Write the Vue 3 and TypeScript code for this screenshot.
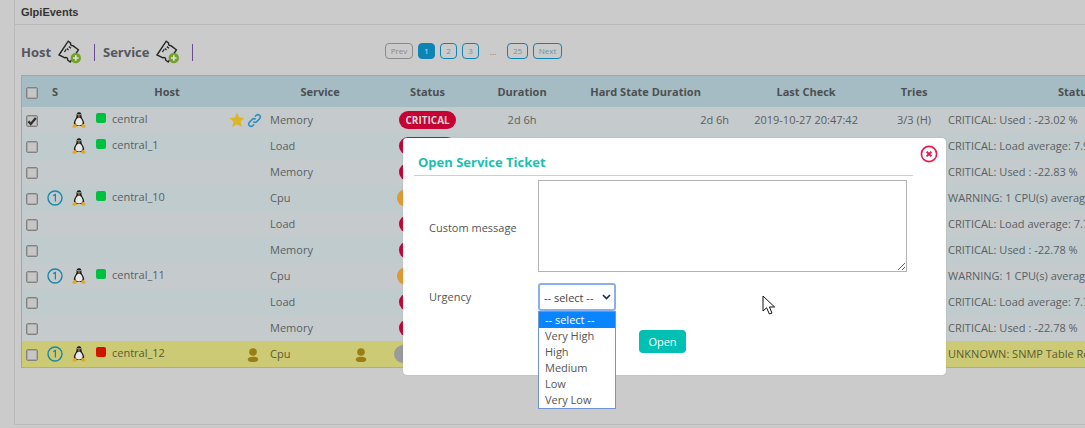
<script setup lang="ts">
interface Row {
  check?: boolean
  ack?: boolean
  os?: boolean
  state?: 'up' | 'down'
  host?: string
  hostIcons?: 'fav' | 'user'
  service: string
  svcUser?: boolean
  status: 'critical' | 'warning' | 'unknown'
  statusLabel?: string
  duration?: string
  hard?: string
  last?: string
  tries?: string
  output: string
}
const rows: Row[] = [
  { check: true, os: true, state: 'up', host: 'central', hostIcons: 'fav', service: 'Memory', status: 'critical', statusLabel: 'CRITICAL', duration: '2d 6h', hard: '2d 6h', last: '2019-10-27 20:47:42', tries: '3/3 (H)', output: 'CRITICAL: Used : -23.02 %' },
  { os: true, state: 'up', host: 'central_1', service: 'Load', status: 'critical', output: 'CRITICAL: Load average: 7.91, 7.64, 7.20' },
  { service: 'Memory', status: 'critical', output: 'CRITICAL: Used : -22.83 %' },
  { ack: true, os: true, state: 'up', host: 'central_10', service: 'Cpu', status: 'warning', output: 'WARNING: 1 CPU(s) average usage' },
  { service: 'Load', status: 'critical', output: 'CRITICAL: Load average: 7.71, 7.60, 7.20' },
  { service: 'Memory', status: 'critical', output: 'CRITICAL: Used : -22.78 %' },
  { ack: true, os: true, state: 'up', host: 'central_11', service: 'Cpu', status: 'warning', output: 'WARNING: 1 CPU(s) average usage' },
  { service: 'Load', status: 'critical', output: 'CRITICAL: Load average: 7.71, 7.60, 7.20' },
  { service: 'Memory', status: 'critical', output: 'CRITICAL: Used : -22.78 %' },
  { ack: true, os: true, state: 'down', host: 'central_12', hostIcons: 'user', service: 'Cpu', svcUser: true, status: 'unknown', output: 'UNKNOWN: SNMP Table Request failed' }
]
const urgencies: string[] = ['-- select --', 'Very High', 'High', 'Medium', 'Low', 'Very Low']
const colWidths: number[] = [22, 22, 26, 18, 118, 40, 82, 22, 111, 78, 169, 152, 64, 328]
const ticketTitles: { label: string; width: number }[] = [
  { label: 'Host', width: 30 },
  { label: 'Service', width: 46 }
]
</script>

<template>
  <div class="page">
    <main class="panel">
      <header class="panel-head">GlpiEvents</header>

      <div class="toolbar">
        <template v-for="t in ticketTitles" :key="t.label">
          <span class="tool-label" :style="{ width: t.width + 'px' }">{{ t.label }}</span>
          <svg class="ticket" width="24" height="24" viewBox="0 0 24 24" fill="none">
            <path d="M1 15 L10.2 1.2 L12.6 3 C12.2 4.6 13.2 5.8 14.8 5.6 L20.4 9.8 L12.2 22 L9.6 20 C10 18.4 8.8 17.2 7.2 17.6 L7 17.8 Z" stroke="#262626" stroke-width="1.4" stroke-linejoin="miter" />
            <path d="M6.4 12 L8.2 9.4 M8.8 8.6 L10.6 10 M10.8 6.6 L13 8.2" stroke="#262626" stroke-width="1.3" />
            <circle cx="17.8" cy="18" r="5.2" fill="#74a12e" />
            <path d="M17.8 15.2 V20.8 M15 18 H20.6" stroke="#dce6c8" stroke-width="1.7" />
          </svg>
          <span class="tool-sep"></span>
        </template>
        <nav class="pager">
          <span class="pg pg-off pg-prev">Prev</span>
          <span class="pg pg-on">1</span>
          <span class="pg">2</span>
          <span class="pg">3</span>
          <span class="pg-dots">...</span>
          <span class="pg pg-wide">25</span>
          <span class="pg pg-next">Next</span>
        </nav>
      </div>

      <table class="grid">
        <colgroup>
          <col v-for="(w, i) in colWidths" :key="i" :style="{ width: w + 'px' }" />
        </colgroup>
        <thead>
          <tr>
            <th class="c-check"><span class="cb"></span></th>
            <th>S</th>
            <th colspan="4">Host</th>
            <th colspan="2">Service</th>
            <th>Status</th>
            <th>Duration</th>
            <th>Hard State Duration</th>
            <th>Last Check</th>
            <th>Tries</th>
            <th>Status information</th>
          </tr>
        </thead>
        <tbody>
          <tr v-for="(r, i) in rows" :key="i" :class="{ odd: i % 2 === 1, alert: r.status === 'unknown' }">
            <td class="c-check">
              <span class="cb">
                <svg v-if="r.check" width="10" height="10" viewBox="0 0 10 10"><path d="M1.4 5.2 L3.8 8 L8.8 2" fill="none" stroke="#333" stroke-width="2.4" /></svg>
              </span>
            </td>
            <td class="c-center">
              <svg v-if="r.ack" class="ack" width="16" height="16" viewBox="0 0 16 16">
                <circle cx="8" cy="8" r="7" fill="none" stroke="#1c86a6" stroke-width="1.4" />
                <path d="M6.2 5.6 L8.4 4.4 V11.6" fill="none" stroke="#1c86a6" stroke-width="1.2" />
              </svg>
            </td>
            <td class="c-center">
              <svg v-if="r.os" class="tux" width="14" height="16" viewBox="0 0 14 16">
                <path d="M7 0.3 C4.7 0.3 4.5 2.4 4.5 4.2 C4.5 6 2 8 1.8 11 C1.7 12.8 3 14 4 14 H10 C11 14 12.3 12.8 12.2 11 C12 8 9.5 6 9.5 4.2 C9.5 2.4 9.3 0.3 7 0.3 Z" fill="#1e1e1e" />
                <path d="M7 5.4 C5.2 5.6 3.4 8.4 3.4 10.6 C3.4 12.6 5 13.6 7 13.6 C9 13.6 10.6 12.6 10.6 10.6 C10.6 8.4 8.8 5.6 7 5.4 Z" fill="#e9e9e9" />
                <circle cx="6" cy="2.6" r="0.7" fill="#e9e9e9" />
                <circle cx="8" cy="2.6" r="0.7" fill="#e9e9e9" />
                <path d="M5.6 3.6 H8.4 L7 5 Z" fill="#e0a81c" />
                <path d="M0.4 14 L3 11.4 L5.4 14.4 L3.2 15.8 L0.6 15.4 Z M13.6 14 L11 11.4 L8.6 14.4 L10.8 15.8 L13.4 15.4 Z" fill="#dfa92a" />
              </svg>
            </td>
            <td class="c-state"><span v-if="r.state" class="sq" :class="r.state"></span></td>
            <td class="c-host">{{ r.host }}</td>
            <td class="c-icons">
              <template v-if="r.hostIcons === 'fav'">
                <svg width="16" height="16" viewBox="0 0 16 16"><path d="M8 0.6 L10.2 5.4 L15.5 6 L11.6 9.6 L12.7 14.9 L8 12.2 L3.3 14.9 L4.4 9.6 L0.5 6 L5.8 5.4 Z" fill="#dcb427" /></svg>
                <svg class="link" width="15" height="15" viewBox="0 0 15 15" fill="none" stroke="#2f8fc0" stroke-width="1.6">
                  <path d="M6.4 8.6 C7.4 9.6 8.8 9.5 9.7 8.6 L12.6 5.7 C13.6 4.7 13.6 3.2 12.6 2.3 C11.6 1.3 10.2 1.4 9.3 2.3 L8 3.6" />
                  <path d="M8.6 6.4 C7.6 5.4 6.2 5.5 5.3 6.4 L2.4 9.3 C1.4 10.3 1.4 11.8 2.4 12.7 C3.4 13.7 4.8 13.6 5.7 12.7 L7 11.4" />
                </svg>
              </template>
              <svg v-else-if="r.hostIcons === 'user'" class="user" width="12" height="14" viewBox="0 0 12 14">
                <circle cx="6" cy="4" r="3.8" fill="#9a7e14" />
                <ellipse cx="6" cy="11.4" rx="5.2" ry="2.6" fill="#9a7e14" />
              </svg>
            </td>
            <td class="c-service">{{ r.service }}</td>
            <td class="c-center">
              <svg v-if="r.svcUser" class="user" width="12" height="14" viewBox="0 0 12 14">
                <circle cx="6" cy="4" r="3.8" fill="#9a7e14" />
                <ellipse cx="6" cy="11.4" rx="5.2" ry="2.6" fill="#9a7e14" />
              </svg>
            </td>
            <td class="c-center"><span class="pill" :class="r.status">{{ r.statusLabel }}</span></td>
            <td class="c-center">{{ r.duration }}</td>
            <td class="c-right">{{ r.hard }}</td>
            <td class="c-center">{{ r.last }}</td>
            <td class="c-center">{{ r.tries }}</td>
            <td class="c-output">{{ r.output }}</td>
          </tr>
        </tbody>
      </table>
    </main>

    <section class="modal">
      <h3 class="modal-title">Open Service Ticket</h3>
      <svg class="modal-close" width="18" height="18" viewBox="0 0 18 18" fill="none">
        <circle cx="9" cy="9" r="7.6" stroke="#e8184f" stroke-width="1.6" />
        <path d="M6.6 6.6 L11.4 11.4 M11.4 6.6 L6.6 11.4" stroke="#e8184f" stroke-width="2" />
      </svg>
      <div class="form">
        <label class="lbl lbl-msg">Custom message</label>
        <textarea class="area"></textarea>
        <label class="lbl lbl-urg">Urgency</label>
        <div class="select-wrap">
          <select class="sel">
            <option>-- select --</option>
          </select>
          <svg class="chev" width="9" height="6" viewBox="0 0 9 6"><path d="M1 1 L4.5 4.5 L8 1" fill="none" stroke="#1d2b4f" stroke-width="1.6" /></svg>
          <ul class="drop">
            <li v-for="(u, i) in urgencies" :key="u" :class="{ active: i === 0 }">{{ u }}</li>
          </ul>
        </div>
        <button class="open" type="button">Open</button>
      </div>
    </section>

    <svg class="cursor" width="15" height="21" viewBox="0 0 15 21">
      <path d="M1 1 V16 L4.6 12.8 L7.4 19 L10 18 L7.4 12 L12.6 12 Z" fill="#fff" stroke="#111" stroke-width="1" stroke-linejoin="miter" />
    </svg>
  </div>
</template>

<style>
html, body { margin: 0; background: #cbcbcb; }
</style>

<style scoped>
.page {
  position: relative;
  width: 1085px;
  height: 428px;
  overflow: hidden;
  background: #cbcbcb;
  font-family: "Open Sans", sans-serif;
  font-size: 11px;
  color: #5b5f62;
}
.panel {
  margin-left: 14px;
  height: 425px;
  box-sizing: border-box;
  border-left: 1px solid #b9b9b9;
  border-bottom: 1px solid #b9b9b9;
}
.panel-head {
  height: 25px;
  box-sizing: border-box;
  border-bottom: 1px solid #b9b9b9;
  padding-left: 6px;
  font-family: "Liberation Sans", sans-serif;
  font-weight: 700;
  font-size: 11px;
  line-height: 24px;
  color: #333;
}
.toolbar {
  display: flex;
  align-items: center;
  height: 50px;
  padding: 4px 0 0 6px;
  box-sizing: border-box;
}
.tool-label {
  flex: none;
  font-size: 13px;
  font-weight: 700;
  color: #55565e;
  line-height: 20px;
  white-space: nowrap;
}
.ticket { margin-left: 7px; flex: none; }
.tool-sep {
  flex: none;
  width: 1px;
  height: 17px;
  background: #6a4c93;
  margin: 0 8px 0 12px;
}
.pager {
  display: flex;
  align-items: center;
  gap: 5px;
  margin-left: 184px;
  margin-bottom: 2px;
}
.pg {
  box-sizing: border-box;
  height: 16px;
  width: 17px;
  border: 1px solid #0f85b4;
  border-radius: 4px;
  font-size: 8px;
  line-height: 14px;
  text-align: center;
  color: #6b93a8;
}
.pg-prev { width: 28px; }
.pg-wide { width: 21px; }
.pg-next { width: 29px; }
.pg-off { border-color: #8b8b8b; color: #8a8a8a; }
.pg-on { background: #0d84b4; color: #cfe3ec; }
.pg-dots { width: 18px; text-align: center; font-size: 8px; color: #777; }

.grid {
  margin-left: 6px;
  width: 1253px;
  table-layout: fixed;
  border-collapse: separate;
  border-spacing: 0;
  border-left: 1px solid #94a9b2;
  border-top: 1px solid #94a9b2;
  border-bottom: 1px solid #a2adb1;
}
.grid th {
  height: 31px;
  padding: 0;
  background: #a5bcc4;
  font-size: 11px;
  font-weight: 700;
  color: #4c4f52;
  text-align: center;
  white-space: nowrap;
}
.grid td {
  box-sizing: border-box;
  height: 26px;
  padding: 0;
  background: #c5cacd;
  line-height: 14px;
  white-space: nowrap;
}
.grid tr.odd td { background: #c0cbce; }
.grid tr.alert td { background: #cdca75; color: #5a5a34; }
.c-check { text-align: center; padding-right: 2px !important; }
.cb {
  display: inline-flex;
  vertical-align: middle;
  box-sizing: border-box;
  width: 12px;
  height: 12px;
  border: 1px solid #828282;
  border-radius: 2px;
  box-shadow: inset 0 0 0 1px #a9a9a9;
  background: #c6c6c6;
  align-items: center;
  justify-content: center;
}
.c-center { text-align: center; }
.c-center svg { vertical-align: middle; }
.c-state { padding-left: 4px !important; padding-bottom: 4px !important; }
.sq {
  display: block;
  width: 10px;
  height: 10px;
  border-radius: 2px;
}
.sq.up { background: #00c040; }
.sq.down { background: #cf1500; }
.c-host { padding-left: 2px !important; padding-bottom: 2px !important; }
.c-icons {
  text-align: right;
  padding-right: 6px !important;
}
.c-icons svg { vertical-align: middle; }
.c-icons .link { margin-left: 2px; }
.c-icons .user { margin-right: 3px; }
.c-service { padding-left: 2px !important; }
.c-right { text-align: right; padding-right: 1px !important; }
.c-output { padding-left: 2px !important; }
.pill {
  display: inline-block;
  box-sizing: border-box;
  vertical-align: middle;
  height: 18px;
  border-radius: 9px;
  font-size: 10px;
  font-weight: 700;
  line-height: 18px;
  text-align: center;
  color: #e0d5d8;
}
.pill.critical { width: 57px; background: #c40233; }
.pill.warning { width: 62px; background: #e0982f; }
.pill.unknown { width: 68px; background: #9a9a9a; }

.modal {
  position: absolute;
  left: 403px;
  top: 138px;
  width: 543px;
  height: 237px;
  box-sizing: border-box;
  background: #fff;
  border-radius: 4px;
  box-shadow: 0 0 1px #888;
  color: #555;
}
.modal-title {
  margin: 0 33px 0 11px;
  padding: 16px 0 5px 4px;
  border-bottom: 1px solid #cfcfcf;
  font-size: 13px;
  font-weight: 700;
  line-height: 16px;
  color: #1bbfb0;
}
.modal-close { position: absolute; left: 517px; top: 7px; }
.form {
  display: grid;
  grid-template-columns: 109px 369px;
  grid-template-rows: 92px 28px auto;
  row-gap: 11px;
  margin: 4px 0 0 26px;
  align-items: center;
}
.lbl { font-size: 11px; color: #555; }
.lbl-msg { margin-top: 2px; }
.lbl-urg { margin-bottom: 2px; }
.area {
  display: block;
  box-sizing: border-box;
  width: 369px;
  height: 92px;
  border: 1px solid #b3b3b3;
  background: #fff;
  resize: both;
  outline: none;
  margin: 0;
}
.select-wrap { position: relative; height: 28px; }
.sel {
  display: block;
  box-sizing: border-box;
  width: 78px;
  height: 28px;
  appearance: none;
  border: 2px solid #8ab0ea;
  border-radius: 3px;
  background: #fff;
  font-family: "Open Sans", sans-serif;
  font-size: 11px;
  color: #444;
  padding: 0 0 0 4px;
  outline: none;
}
.chev { position: absolute; left: 64px; top: 11px; pointer-events: none; }
.drop {
  position: absolute;
  left: 0;
  top: 28px;
  z-index: 2;
  box-sizing: border-box;
  width: 78px;
  margin: 0;
  padding: 0;
  list-style: none;
  background: #fff;
  border: 1px solid #7094cf;
}
.drop li {
  height: 16px;
  line-height: 16px;
  padding-left: 6px;
  font-size: 11px;
  color: #555;
}
.drop li.active { background: #0a84ff; color: #fff; }
.open {
  grid-column: 2;
  justify-self: start;
  margin: 8px 0 0 101px;
  width: 47px;
  height: 23px;
  padding: 0;
  border: 0;
  border-radius: 4px;
  background: #00bfb3;
  color: #fff;
  font-family: "Open Sans", sans-serif;
  font-size: 11px;
  font-weight: 400;
}
.cursor { position: absolute; left: 762px; top: 295px; z-index: 5; }
</style>
